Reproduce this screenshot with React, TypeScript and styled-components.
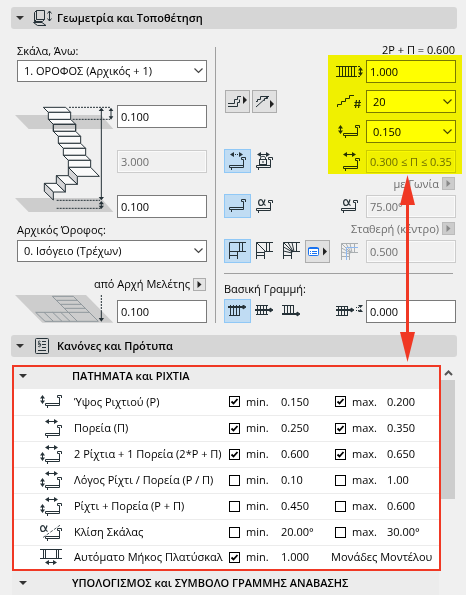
import React, { useState } from "react";
import styled, { createGlobalStyle, css } from "styled-components";

const ink = "#263238";
const red = "#f03824";

const GlobalStyle = createGlobalStyle`
  *, *::before, *::after { box-sizing: border-box; }
  body { margin: 0; background: #f0f0f0; }
  body, button, input, select {
    font-family: "Open Sans", "Noto Sans", sans-serif;
    font-size: 11px;
    line-height: 16px;
    color: #000;
  }
`;

const Page = styled.main`
  position: relative;
  padding: 7px 9px 0 11px;
`;

const SectionBar = styled.h2`
  display: flex;
  align-items: center;
  height: 22px;
  margin: 0;
  padding-left: 5px;
  border-radius: 3px;
  background: #d6d6d6;
  font-size: 11px;
  font-weight: 600;
`;

const FoldButton = styled.button`
  display: flex;
  flex: none;
  padding: 0;
  border: 0;
  background: none;
`;

const SectionTitle = styled.span`
  margin-left: 5px;
  white-space: nowrap;
`;

const SectionIcon = styled.span`
  display: flex;
  justify-content: center;
  width: 19px;
  margin-left: 9px;
  color: ${ink};
`;

const Geometry = styled.section`
  display: grid;
  grid-template-columns: 190px auto 1fr;
  padding: 12px 1px 12px 6px;
`;

const LeftPane = styled.div`
  display: flex;
  flex-direction: column;
`;

const Divider = styled.div`
  width: 1px;
  margin: 6px 8px 0;
  background: #a0a0a0;
`;

const RightPane = styled.div`
  display: flex;
  flex-direction: column;
`;

const LabelRow = styled.div<{ $end?: boolean; $dim?: boolean; $height?: number }>`
  display: flex;
  align-items: center;
  justify-content: ${(p) => (p.$end ? "flex-end" : "flex-start")};
  gap: 3px;
  height: ${(p) => p.$height ?? 20}px;
  padding-right: ${(p) => (p.$end ? 1 : 0)}px;
  color: ${(p) => (p.$dim ? "#6d6d6d" : "#000")};
  white-space: nowrap;
`;

const OriginLabel = styled(LabelRow)`
  margin-top: 12px;
`;

const PopButton = styled.button`
  display: flex;
  align-items: center;
  justify-content: center;
  width: 13px;
  height: 13px;
  padding: 0;
  border: 1px solid #adadad;
  background: #e4e4e4;
  color: #222;
  &:disabled { background: #ccc; border-color: #bbb; color: #888; }
`;

const fieldLook = css`
  width: 100%;
  height: 23px;
  margin: 0;
  border: 1px solid #7a7a7a;
  border-radius: 0;
  background: #fff;
  outline: none;
  &:disabled {
    border-color: #ccc;
    background: #f0f0f0;
    box-shadow: inset 0 0 0 1px #fafafa;
    color: #6d6d6d;
    opacity: 1;
  }
`;

const Field = styled.input`
  ${fieldLook}
  padding: 0 3px;
`;

const SelectBox = styled.span`
  display: grid;
  align-items: center;
  width: 100%;
  > * { grid-area: 1 / 1; }
  > svg { justify-self: end; margin-right: 4px; pointer-events: none; }
`;

const Select = styled.select<{ $slim?: boolean }>`
  ${fieldLook}
  height: ${(p) => (p.$slim ? 22 : 23)}px;
  appearance: none;
  padding: 0 20px 0 6px;
`;

const StairRow = styled.div`
  display: flex;
  justify-content: space-between;
  height: 113px;
  margin: 23px 0 2px -3px;
`;

const FieldStack = styled.div`
  display: flex;
  flex-direction: column;
  justify-content: space-between;
  width: 90px;
`;

const OriginRow = styled.div`
  display: flex;
  justify-content: space-between;
  align-items: flex-end;
  margin-left: -3px;
`;

const ToolRows = styled.div`
  position: relative;
  display: flex;
  flex-direction: column;
  gap: 6px;
`;

const Highlight = styled.div`
  position: absolute;
  inset: -4px -6px -1px auto;
  width: 134px;
  background: #ffff00;
  mix-blend-mode: multiply;
  pointer-events: none;
`;

const ToolRow = styled.div`
  display: flex;
  align-items: flex-end;
  height: 24px;
`;

const Tools = styled.div<{ $framed?: boolean }>`
  display: flex;
  flex: 1;
  align-items: flex-end;
  gap: ${(p) => (p.$framed ? 2 : 0)}px;
  padding-left: ${(p) => (p.$framed ? 1 : 0)}px;
`;

const ToolButton = styled.button<{ $look?: "active" | "raised" }>`
  display: flex;
  align-items: center;
  justify-content: center;
  width: ${(p) => (p.$look === "raised" ? 25 : 27)}px;
  height: ${(p) => (p.$look === "raised" ? 23 : 24)}px;
  padding: 0;
  color: ${ink};
  border: 1px solid
    ${(p) => (p.$look === "active" ? "#90c8f6" : p.$look === "raised" ? "#adadad" : "transparent")};
  background: ${(p) => (p.$look === "active" ? "#c0dcf3" : p.$look === "raised" ? "#e1e1e1" : "none")};
`;

const FieldLabel = styled.label`
  display: flex;
  align-items: center;
  width: 120px;
  height: 23px;
  color: ${ink};
`;

const FieldIcon = styled.span`
  display: flex;
  flex: none;
  justify-content: center;
  width: 27px;
  margin-right: 3px;
`;

const Rule = styled.hr`
  width: calc(100% - 3px);
  height: 1px;
  margin: 10px 0 5px;
  border: 0;
  background: #a0a0a0;
`;

const Criteria = styled.section`
  display: flex;
  margin: 8px 2px 0 1px;
`;

const CriteriaList = styled.div`
  flex: 1;
  min-width: 0;
`;

const RedFrame = styled.div`
  border: 2px solid ${red};
  background: #fff;
`;

const GroupBar = styled.h3`
  display: flex;
  align-items: center;
  height: 22px;
  margin: 0;
  padding: 0 0 4px 5px;
  gap: 45px;
  background: #ececec;
  font-size: 11px;
  font-weight: 600;
  white-space: nowrap;
`;

const NextGroupBar = styled(GroupBar)`
  height: 24px;
  margin-right: 2px;
  padding: 0 0 0 7px;
`;

const Table = styled.table`
  width: 100%;
  border-collapse: collapse;
  table-layout: fixed;
`;

const Row = styled.tr`
  height: 26px;
  border-bottom: 1px solid #ececec;
  &:last-child { height: 24px; border-bottom: 0; }
`;

const Cell = styled.td`
  padding: 0;
  overflow: hidden;
  white-space: nowrap;
`;

const IconCell = styled(Cell)`
  padding-left: 26px;
  color: ${ink};
  svg { display: block; }
`;

const NameCell = styled.th`
  padding: 0;
  font-weight: 400;
  text-align: left;
  > div { overflow: hidden; white-space: nowrap; margin-right: 6px; }
`;

const Col = styled.col<{ $w?: number }>`
  width: ${(p) => (p.$w ? `${p.$w}px` : "auto")};
`;

const Check = styled.label<{ $inset?: boolean }>`
  display: flex;
  align-items: center;
  gap: 6px;
  padding-left: ${(p) => (p.$inset ? 4 : 0)}px;
`;

const CheckBox = styled.span`
  display: grid;
  > * { grid-area: 1 / 1; }
  svg { pointer-events: none; visibility: hidden; }
  input:checked + svg { visibility: visible; }
`;

const CheckInput = styled.input`
  appearance: none;
  width: 11px;
  height: 11px;
  margin: 0;
  border: 1px solid #000;
  background: #fff;
`;

const ScrollBar = styled.div`
  width: 14px;
  flex: none;
`;

const ScrollUp = styled.button`
  display: flex;
  align-items: center;
  justify-content: center;
  width: 14px;
  height: 15px;
  padding: 0;
  border: 0;
  background: none;
`;

const ScrollThumb = styled.div`
  height: 119px;
  background: #cdcdcd;
`;

const LinkArrow = styled.svg`
  position: absolute;
  top: 175px;
  right: 51px;
  pointer-events: none;
`;

/* ---------- icons ---------- */

type IconProps = { w: number; h: number; children: React.ReactNode };
const Icon = ({ w, h, children }: IconProps) => (
  <svg width={w} height={h} viewBox={`0 0 ${w} ${h}`} fill="none" stroke="currentColor" aria-hidden="true">
    {children}
  </svg>
);

const Step = ({ x, y }: { x: number; y: number }) => (
  <path
    transform={`translate(${x} ${y})`}
    d="M14.5 8.5H.5V10.5H14.5V2.5H12.5V.5H16.5V3M2.5 10.5V13"
  />
);
const HArrow = ({ x, y, w = 13, dash }: { x: number; y: number; w?: number; dash?: boolean }) => (
  <g transform={`translate(${x} ${y})`}>
    <path d={`M3 2.5H${w - 3}`} strokeDasharray={dash ? "1 1" : undefined} />
    <path d={`M0 2.5L4 0V5ZM${w} 2.5L${w - 4} 0V5Z`} fill="currentColor" stroke="none" />
  </g>
);
const VArrow = ({ x, y, h = 9 }: { x: number; y: number; h?: number }) => (
  <g transform={`translate(${x} ${y})`}>
    <path d={`M2.5 2V${h - 2}`} />
    <path d={`M2.5 0L5 3.5H0ZM2.5 ${h}L5 ${h - 3.5}H0Z`} fill="currentColor" stroke="none" />
  </g>
);
const Alpha = ({ x, y }: { x: number; y: number }) => (
  <path
    transform={`translate(${x} ${y})`}
    strokeWidth="1.2"
    d="M7 .5C6 4 5 6.5 3 6.5C1.2 6.5.6 5 .6 3.6C.6 2 1.4.6 3 .6C5 .6 5.5 6.5 7.6 6.3"
  />
);

const Fold = () => (
  <Icon w={8} h={6}><path d="M0 1H8L4 5Z" fill="#333" stroke="none" /></Icon>
);
const Play = () => (
  <Icon w={5} h={7}><path d="M.5 0L4.5 3.5L.5 7Z" fill="currentColor" stroke="none" /></Icon>
);
const Chevron = () => (
  <Icon w={9} h={6}><path d="M.5 .5L4.5 4.5L8.5 .5" stroke="#444" strokeWidth="1.2" /></Icon>
);

const GeometryIcon = () => (
  <Icon w={19} h={16}>
    <path d="M3.5 .5H11.5V9.5H3.5ZM3.5 .5L1.5 2.5V11.5L3.5 9.5M1.5 11.5H9.5L11.5 9.5" />
    <path d="M.5 12.5H9L13 15.5H4.5Z" />
    <path d="M16.5 1V11M14.5 3.5L16.5 1L18.5 3.5M14.5 8.5L16.5 11L18.5 8.5" />
  </Icon>
);
const RulesIcon = () => (
  <Icon w={15} h={16}>
    <rect x=".5" y=".5" width="13" height="15" rx="1" />
    <path d="M7 3.5H11M7 6.5H11M7 9.5H11M3 12.5H11" />
    <path d="M5.5 3.5C5 2.8 3.3 2.8 3.3 4C3.3 5.2 5.6 5 5.6 6.4C5.6 7.2 3.3 7.2 3.3 6C3.3 5 5.6 5.2 5.6 7.4C5.6 9 3.8 9 3 8.2" strokeWidth=".9" />
  </Icon>
);

const WidthIcon = () => (
  <Icon w={27} h={11}>
    <path d="M0 .5H19M0 10.5H19M3.5 0V11M6.5 0V11M9.5 0V11M12.5 0V11M15.5 0V11M18.5 0V11" />
    <path d="M19 .5H24M19 10.5H24" strokeDasharray="2 1" />
    <VArrow x={22} y={1} h={9} />
  </Icon>
);
const CountIcon = () => (
  <Icon w={25} h={15}>
    <path d="M.5 13V10.5H4.5V7.5H8.5V4.5H12.5V1.5H17" />
    <path d="M19.5 6L18.5 14M22.5 6L21.5 14M17.5 8.5H24M17 11.5H23.5" strokeWidth="1.2" />
  </Icon>
);
const RiserIcon = () => (
  <Icon w={23} h={13}><VArrow x={0} y={0} /><Step x={5} y={0} /></Icon>
);
const GoingIcon = ({ dash }: { dash?: boolean }) => (
  <Icon w={17} h={18}><HArrow x={1} y={0} dash={dash} /><Step x={0} y={5} /></Icon>
);
const BothIcon = () => (
  <Icon w={23} h={19}><HArrow x={5} y={0} /><VArrow x={0} y={7} /><Step x={5} y={6} /></Icon>
);
const GoingRowIcon = () => (
  <Icon w={23} h={19}><HArrow x={5} y={0} /><Step x={5} y={6} /></Icon>
);
const LockIcon = () => (
  <Icon w={17} h={18}>
    <HArrow x={1} y={0} />
    <Step x={0} y={5} />
    <rect x="3.5" y="7.5" width="7" height="5" fill="#f0f0f0" />
    <path d="M4.5 7.5V6C4.5 3.8 9.5 3.8 9.5 6V7.5M7 9V11" />
  </Icon>
);
const StepIcon = () => <Icon w={17} h={14}><Step x={0} y={0} /></Icon>;
const AngleIcon = ({ h = 14 }: { h?: number }) => (
  <Icon w={17} h={h}><Alpha x={2} y={0} /><Step x={0} y={1} /></Icon>
);
const SlopeIcon = () => (
  <Icon w={23} h={17}>
    <Alpha x={0} y={1} />
    <path d="M3 13.5L21 .5" strokeDasharray="3 1.5" strokeWidth=".8" />
    <Step x={5} y={4} />
  </Icon>
);
const LandingIcon = () => (
  <Icon w={23} h={16}>
    <path d="M0 .5H22M0 9.5H22M3.5 0V10M5.5 0V10M16.5 0V10M18.5 0V10" />
    <HArrow x={5} y={11} w={12} />
  </Icon>
);
const TurnFlat = () => (
  <Icon w={17} h={18}>
    <path d="M.5 17V.5H17M8.5 17V9.5H17M.5 9.5H10.5V.5M.5 13.5H8.5M13.5 .5V9.5" />
  </Icon>
);
const TurnSplit = () => (
  <Icon w={17} h={18}>
    <path d="M.5 17V.5H17M8.5 17V9.5H17M.5 .5L9.5 9.5M10.5 .5V9.5M.5 10.5H8.5M13.5 .5V9.5M.5 13.5H8.5" />
  </Icon>
);
const fanPath =
  "M.5 17V.5H17M8.5 17V9.5H17M.5 .5L9.5 9.5M5 .5L10 9.5M.5 5L9.5 10M9 .5L11 9.5M.5 9L9 11M13.5 .5V9.5M.5 13.5H8.5";
const TurnFan = () => (
  <Icon w={17} h={18}><path d={fanPath} /></Icon>
);
const TurnOffset = () => (
  <Icon w={17} h={17}>
    <path d={fanPath} stroke="#a9aeb1" />
    <path d="M5.5 17V4.5H17" stroke="#8db8f0" />
  </Icon>
);
const ListPlay = () => (
  <Icon w={19} h={11}>
    <rect x=".5" y="1.5" width="10" height="8" rx="1" fill="#fff" stroke="#1a73f0" />
    <path d="M0 2.5H11M2 5.5H3M4 5.5H9M2 7.5H3M4 7.5H9" stroke="#1a73f0" />
    <path d="M15 1.5L19 5.5L15 9.5Z" fill="#222" stroke="none" />
  </Icon>
);
const LowerEndIcon = () => (
  <Icon w={19} h={13}>
    <path d="M0 8.5H6.5V4.5H9.5V1.5H13M0 11.5H9.5V7.5H11.5V4.5" />
    <path d="M15 1L19 5L15 9Z" fill="#222" stroke="none" />
  </Icon>
);
const UpperEndIcon = () => (
  <Icon w={19} h={13}>
    <path d="M1 6.5H2.5V4.5H5.5V1.5H14M8.5 5.5H9.5V3.5H12.5V1.5M1 12L12 2" />
    <path d="M15 5L19 9L15 13Z" fill="#222" stroke="none" />
  </Icon>
);
const lineY = { top: 2, mid: 5, low: 9 };
const BaseLineIcon = ({ at }: { at: "top" | "mid" | "low" }) => (
  <Icon w={19} h={12}>
    <path d={at === "mid" ? "M1 .5H13M1 9.5H13" : at === "top" ? "M1 10.5H12" : "M0 .5H12"} />
    <path d="M2.5 0V10M5.5 0V10M8.5 0V10M11.5 0V10" />
    <path d={`M0 ${lineY[at]}H15`} strokeWidth="2" />
    <path d={`M15 ${lineY[at] - 2}L18 ${lineY[at]}L15 ${lineY[at] + 2}Z`} fill="currentColor" />
  </Icon>
);
const OffsetIcon = () => (
  <Icon w={27} h={13}>
    <path d="M0 1.5H12M0 10.5H12M2.5 1V11M5.5 1V11M8.5 1V11M11.5 1V11" />
    <path d="M0 5H15" strokeWidth="2" />
    <path d="M15 3L18 5L15 7Z" fill="currentColor" />
    <path d="M20 2.5H23M20 5.5H23" strokeDasharray="1 1" />
    <path d="M22 0H27L24.5 3ZM22 7H27L24.5 4Z" fill="currentColor" stroke="none" />
  </Icon>
);

const StairDrawing = () => {
  const flight = [2, 3, 4].map((i) => ({ x: 130 + i * 15, y: 52 + i * 36 }));
  const step = (x: number, y: number) => (
    <g key={y}>
      <path d={`M${x} ${y}H${x + 67}L${x + 82} ${y + 15}H${x + 15}Z`} />
      <path d={`M${x + 15} ${y + 15}H${x + 82}V${y + 36}H${x + 15}Z`} />
    </g>
  );
  return (
    <svg width="100" height="108" viewBox="42 45 300 324" aria-hidden="true">
      <path d="M45 324H303L340 366H86Z" fill="#cdcdcd" />
      <path d="M45 75H303L340 117H86Z" fill="#cdcdcd" />
      <g fill="#fafafa" stroke={ink} strokeWidth="3" strokeLinejoin="round">
        {step(145, 88)}
        <path d="M161 104H226V117H161Z" fill="#c8c8c8" stroke="none" />
        <path d="M160 124V103H227V124" fill="none" />
        {step(130, 52)}
        {flight.map((f) => step(f.x, f.y))}
        <path d="M205 232H272L298 259H232Z" />
        <path d="M169 257H205L232 283H196Z" />
        <path d="M133 280H169L196 306H160Z" />
        <g fill="#d4d4d6">
          <path d="M205 232L232 259V283L205 257Z" />
          <path d="M169 257L196 283V306L169 280Z" />
          <path d="M133 280L160 306V330L133 304Z" />
        </g>
      </g>
      <g stroke={ink} strokeWidth="3" fill="none">
        <path d="M207 52H330M218 88H330M170 331H300M170 355H305" strokeDasharray="6 3" />
        <path d="M304 60V325M333 60V82M304 338V350" />
      </g>
      <path
        fill={ink}
        d="M304 53L312 63H296ZM304 331L312 321H296ZM333 53L340 63H326ZM333 89L340 79H326ZM304 333L312 343H296ZM304 357L312 347H296Z"
      />
    </svg>
  );
};

const PlanDrawing = () => (
  <svg width="100" height="29" viewBox="42 240 300 87" aria-hidden="true">
    <path d="M45 243H258L340 326H127Z" fill="#cdcdcd" />
    <path
      d="M157 247H220L295 322H135L107 295H205M157 247L232 322M169 259H232M181 271H244M193 283H256M205 295H268M132 295L160 322M158 295L186 322M182 295L210 322"
      fill="none"
      stroke="#90989d"
      strokeWidth="3"
    />
    <path d="M304 243V290" stroke={ink} strokeWidth="3" strokeDasharray="6 3" />
    <path d="M304 290V315" stroke={ink} strokeWidth="3" />
    <path d="M304 323L312 312H296Z" fill={ink} />
  </svg>
);

/* ---------- controls ---------- */

const Dropdown = ({ options, label, slim }: { options: string[]; label: string; slim?: boolean }) => (
  <SelectBox>
    <Select $slim={slim} aria-label={label} defaultValue={options[0]}>
      {options.map((o) => <option key={o}>{o}</option>)}
    </Select>
    <Chevron />
  </SelectBox>
);

type Limit = { on: boolean; value: string };
type Criterion = { icon: React.ReactNode; name: string; min: Limit; max?: Limit };

const criteria: Criterion[] = [
  { icon: <RiserIcon />, name: "Ύψος Ριχτιού (P)", min: { on: true, value: "0.150" }, max: { on: true, value: "0.200" } },
  { icon: <GoingRowIcon />, name: "Πορεία (Π)", min: { on: true, value: "0.250" }, max: { on: true, value: "0.350" } },
  { icon: <BothIcon />, name: "2 Ρίχτια + 1 Πορεία (2*P + Π)", min: { on: true, value: "0.600" }, max: { on: true, value: "0.650" } },
  { icon: <BothIcon />, name: "Λόγος Ρίχτι / Πορεία (P / Π)", min: { on: false, value: "0.10" }, max: { on: false, value: "1.00" } },
  { icon: <BothIcon />, name: "Ρίχτι + Πορεία (P + Π)", min: { on: false, value: "0.450" }, max: { on: false, value: "0.600" } },
  { icon: <SlopeIcon />, name: "Κλίση Σκάλας", min: { on: false, value: "20.00°" }, max: { on: false, value: "30.00°" } },
  { icon: <LandingIcon />, name: "Αυτόματο Μήκος Πλατύσκαλ", min: { on: true, value: "1.000" } },
];

const LimitCheck = ({ on, text, inset }: { on: boolean; text: string; inset?: boolean }) => {
  const [checked, setChecked] = useState(on);
  return (
    <Check $inset={inset}>
      <CheckBox>
        <CheckInput type="checkbox" checked={checked} onChange={(e) => setChecked(e.target.checked)} />
        <Icon w={11} h={11}><path d="M2.5 5.5L4.5 7.5L8.5 3" stroke="#000" strokeWidth="1.8" /></Icon>
      </CheckBox>
      {text}
    </Check>
  );
};

export default function App() {
  return (
    <Page>
      <GlobalStyle />
      <SectionBar>
        <FoldButton aria-label="Γεωμετρία"><Fold /></FoldButton>
        <SectionIcon><GeometryIcon /></SectionIcon>
        <SectionTitle>Γεωμετρία και Τοποθέτηση</SectionTitle>
      </SectionBar>

      <Geometry>
        <LeftPane>
          <LabelRow $height={19}>Σκάλα, Άνω:</LabelRow>
          <Dropdown slim label="Σκάλα, Άνω" options={["1. ΟΡΟΦΟΣ (Αρχικός + 1)"]} />
          <StairRow>
            <StairDrawing />
            <FieldStack>
              <Field aria-label="Άνω απόσταση" defaultValue="0.100" />
              <Field aria-label="Ύψος" defaultValue="3.000" disabled />
              <Field aria-label="Κάτω απόσταση" defaultValue="0.100" />
            </FieldStack>
          </StairRow>
          <LabelRow>Αρχικός Όροφος:</LabelRow>
          <Dropdown slim label="Αρχικός Όροφος" options={["0. Ισόγειο (Τρέχων)"]} />
          <OriginLabel $end>
            από Αρχή Μελέτης
            <PopButton aria-label="Αρχή Μελέτης"><Play /></PopButton>
          </OriginLabel>
          <OriginRow>
            <PlanDrawing />
            <FieldStack>
              <Field aria-label="από Αρχή Μελέτης" defaultValue="0.100" />
            </FieldStack>
          </OriginRow>
        </LeftPane>

        <Divider />

        <RightPane>
          <LabelRow $end $height={18}>2P + Π = 0.600</LabelRow>
          <ToolRows>
            <ToolRow>
              <Tools />
              <FieldLabel>
                <FieldIcon><WidthIcon /></FieldIcon>
                <Field aria-label="Πλάτος" defaultValue="1.000" />
              </FieldLabel>
            </ToolRow>
            <ToolRow>
              <Tools $framed>
                <ToolButton $look="raised" aria-label="Κάτω άκρο"><LowerEndIcon /></ToolButton>
                <ToolButton $look="raised" aria-label="Άνω άκρο"><UpperEndIcon /></ToolButton>
              </Tools>
              <FieldLabel>
                <FieldIcon><CountIcon /></FieldIcon>
                <Dropdown label="Πλήθος" options={["20"]} />
              </FieldLabel>
            </ToolRow>
            <ToolRow>
              <Tools />
              <FieldLabel>
                <FieldIcon><RiserIcon /></FieldIcon>
                <Dropdown label="Ρίχτι" options={["0.150"]} />
              </FieldLabel>
            </ToolRow>
            <ToolRow>
              <Tools>
                <ToolButton $look="active" aria-label="Ελεύθερη πορεία"><GoingIcon dash /></ToolButton>
                <ToolButton aria-label="Κλειδωμένη πορεία"><LockIcon /></ToolButton>
              </Tools>
              <FieldLabel>
                <FieldIcon><GoingRowIcon /></FieldIcon>
                <Field aria-label="Πορεία" defaultValue="0.300 ≤ Π ≤ 0.35" disabled />
              </FieldLabel>
            </ToolRow>
            <Highlight />
          </ToolRows>

          <LabelRow $end $dim $height={21}>
            με Γωνία
            <PopButton disabled aria-label="με Γωνία"><Play /></PopButton>
          </LabelRow>
          <ToolRow>
            <Tools>
              <ToolButton $look="active" aria-label="Κάθετο ρίχτι"><StepIcon /></ToolButton>
              <ToolButton aria-label="Κεκλιμένο ρίχτι"><AngleIcon /></ToolButton>
            </Tools>
            <FieldLabel>
              <FieldIcon><AngleIcon h={15} /></FieldIcon>
              <Field aria-label="Γωνία" defaultValue="75.00°" disabled />
            </FieldLabel>
          </ToolRow>
          <LabelRow $end $dim $height={21}>
            Σταθερή (κέντρο)
            <PopButton disabled aria-label="Σταθερή"><Play /></PopButton>
          </LabelRow>
          <ToolRow>
            <Tools>
              <ToolButton $look="active" aria-label="Πλατύσκαλο"><TurnFlat /></ToolButton>
              <ToolButton aria-label="Διαιρεμένο"><TurnSplit /></ToolButton>
              <ToolButton aria-label="Σφηνοειδή"><TurnFan /></ToolButton>
              <ToolButton $look="raised" aria-label="Επιλογές στροφής"><ListPlay /></ToolButton>
            </Tools>
            <FieldLabel>
              <FieldIcon><TurnOffset /></FieldIcon>
              <Field aria-label="Μετατόπιση" defaultValue="0.500" disabled />
            </FieldLabel>
          </ToolRow>
          <Rule />
          <LabelRow>Βασική Γραμμή:</LabelRow>
          <ToolRow>
            <Tools>
              <ToolButton $look="active" aria-label="Άνω γραμμή"><BaseLineIcon at="top" /></ToolButton>
              <ToolButton aria-label="Μεσαία γραμμή"><BaseLineIcon at="mid" /></ToolButton>
              <ToolButton aria-label="Κάτω γραμμή"><BaseLineIcon at="low" /></ToolButton>
            </Tools>
            <FieldLabel>
              <FieldIcon><OffsetIcon /></FieldIcon>
              <Field aria-label="Απόσταση γραμμής" defaultValue="0.000" />
            </FieldLabel>
          </ToolRow>
        </RightPane>
      </Geometry>

      <SectionBar>
        <FoldButton aria-label="Κανόνες"><Fold /></FoldButton>
        <SectionIcon><RulesIcon /></SectionIcon>
        <SectionTitle>Κανόνες και Πρότυπα</SectionTitle>
      </SectionBar>

      <Criteria>
        <CriteriaList>
          <RedFrame>
            <GroupBar>
              <FoldButton aria-label="Πατήματα"><Fold /></FoldButton>
              ΠΑΤΗΜΑΤΑ και ΡΙΧΤΙΑ
            </GroupBar>
            <Table>
              <colgroup>
                <Col $w={60} /><Col /><Col $w={52} /><Col $w={50} /><Col $w={56} /><Col $w={52} />
              </colgroup>
              <tbody>
                {criteria.map((c) => (
                  <Row key={c.name}>
                    <IconCell>{c.icon}</IconCell>
                    <NameCell scope="row"><div>{c.name}</div></NameCell>
                    <Cell><LimitCheck on={c.min.on} text="min." /></Cell>
                    <Cell>{c.min.value}</Cell>
                    {c.max ? (
                      <>
                        <Cell><LimitCheck on={c.max.on} text="max." inset /></Cell>
                        <Cell>{c.max.value}</Cell>
                      </>
                    ) : (
                      <Cell colSpan={2}>Μονάδες Μοντέλου</Cell>
                    )}
                  </Row>
                ))}
              </tbody>
            </Table>
          </RedFrame>
          <NextGroupBar>
            <FoldButton aria-label="Υπολογισμός"><Fold /></FoldButton>
            ΥΠΟΛΟΓΙΣΜΟΣ και ΣΥΜΒΟΛΟ ΓΡΑΜΜΗΣ ΑΝΑΒΑΣΗΣ
          </NextGroupBar>
        </CriteriaList>
        <ScrollBar>
          <ScrollUp aria-label="Κύλιση επάνω">
            <Icon w={9} h={6}><path d="M1 5L4.5 1.5L8 5" stroke="#555" strokeWidth="2" /></Icon>
          </ScrollUp>
          <ScrollThumb />
        </ScrollBar>
      </Criteria>

      <LinkArrow width="15" height="187" viewBox="0 0 15 187" aria-hidden="true">
        <path d="M7.5 0L15 30H0ZM7.5 187L0 157H15Z" fill={red} />
        <path d="M7.5 25V162" stroke={red} strokeWidth="3" />
      </LinkArrow>
    </Page>
  );
}
